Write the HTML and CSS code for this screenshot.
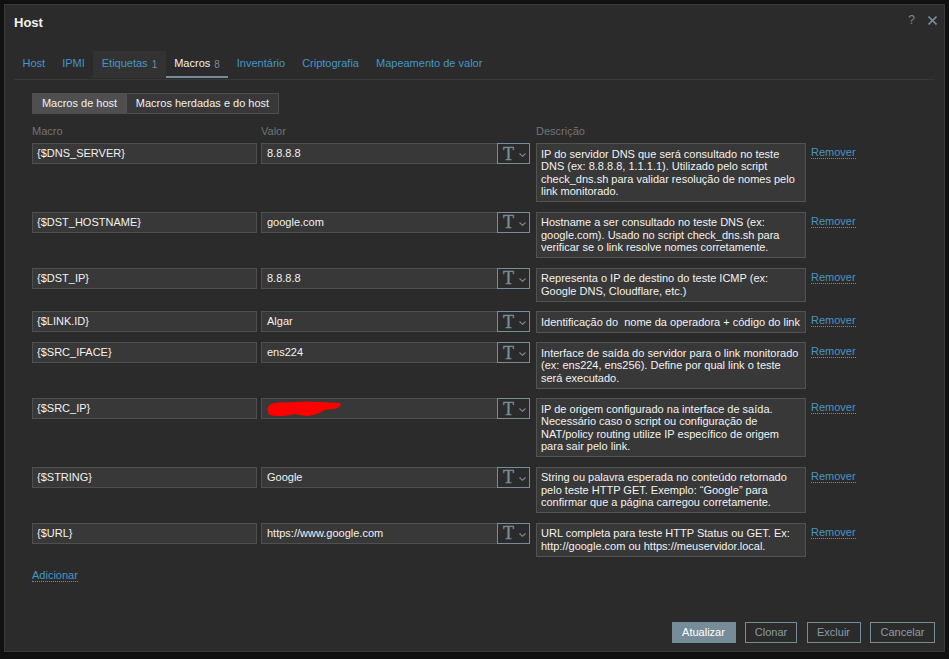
FILE: index.html
```html
<!DOCTYPE html>
<html lang="pt-BR">
<head>
<meta charset="utf-8">
<title>Host</title>
<link rel="stylesheet" href="styles.css">
</head>
<body>
<div class="dialog">
  <div class="dialog-head">
    <h1 class="title">Host</h1>
    <div class="head-ctrls">
      <span class="help">?</span>
      <svg class="close" width="9" height="9" viewBox="0 0 9 9"><path d="M0.5 0.5 L8.5 8.5 M8.5 0.5 L0.5 8.5" stroke="#768d99" stroke-width="1.6" fill="none"/></svg>
    </div>
  </div>

  <ul class="tabs">
    <li class="tab">Host</li>
    <li class="tab">IPMI</li>
    <li class="tab hover">Etiquetas<span class="count">1</span></li>
    <li class="tab active">Macros<span class="count">8</span></li>
    <li class="tab">Inventário</li>
    <li class="tab">Criptografia</li>
    <li class="tab">Mapeamento de valor</li>
  </ul>

  <div class="tab-body">
    <div class="seg">
      <span class="seg-btn on seg-a">Macros de host</span>
      <span class="seg-btn seg-b">Macros herdadas e do host</span>
    </div>

    <div class="row grid-head">
      <div class="c-macro">Macro</div>
      <div class="c-value">Valor</div>
      <div class="c-desc">Descrição</div>
    </div>

    <div class="rows">
      <div class="row">
        <div class="c-macro input">{$DNS_SERVER}</div>
        <div class="c-value"><div class="input">8.8.8.8</div><div class="t-btn"><span class="t-glyph">T</span><svg width="7" height="4" viewBox="0 0 7 4"><path d="M0.5 0.5 L3.5 3.3 L6.5 0.5" stroke="#768d99" stroke-width="1.1" fill="none"/></svg></div></div>
        <div class="c-desc desc">IP do servidor DNS que será consultado no teste<br>DNS (ex: 8.8.8.8, 1.1.1.1). Utilizado pelo script<br>check_dns.sh para validar resolução de nomes pelo<br>link monitorado.</div>
        <div class="c-act"><span class="link">Remover</span></div>
      </div>

      <div class="row">
        <div class="c-macro input">{$DST_HOSTNAME}</div>
        <div class="c-value"><div class="input">google.com</div><div class="t-btn"><span class="t-glyph">T</span><svg width="7" height="4" viewBox="0 0 7 4"><path d="M0.5 0.5 L3.5 3.3 L6.5 0.5" stroke="#768d99" stroke-width="1.1" fill="none"/></svg></div></div>
        <div class="c-desc desc">Hostname a ser consultado no teste DNS (ex:<br>google.com). Usado no script check_dns.sh para<br>verificar se o link resolve nomes corretamente.</div>
        <div class="c-act"><span class="link">Remover</span></div>
      </div>

      <div class="row">
        <div class="c-macro input">{$DST_IP}</div>
        <div class="c-value"><div class="input">8.8.8.8</div><div class="t-btn"><span class="t-glyph">T</span><svg width="7" height="4" viewBox="0 0 7 4"><path d="M0.5 0.5 L3.5 3.3 L6.5 0.5" stroke="#768d99" stroke-width="1.1" fill="none"/></svg></div></div>
        <div class="c-desc desc">Representa o IP de destino do teste ICMP (ex:<br>Google DNS, Cloudflare, etc.)</div>
        <div class="c-act"><span class="link">Remover</span></div>
      </div>

      <div class="row">
        <div class="c-macro input">{$LINK.ID}</div>
        <div class="c-value"><div class="input">Algar</div><div class="t-btn"><span class="t-glyph">T</span><svg width="7" height="4" viewBox="0 0 7 4"><path d="M0.5 0.5 L3.5 3.3 L6.5 0.5" stroke="#768d99" stroke-width="1.1" fill="none"/></svg></div></div>
        <div class="c-desc desc">Identificação do &nbsp;nome da operadora + código do link</div>
        <div class="c-act"><span class="link">Remover</span></div>
      </div>

      <div class="row">
        <div class="c-macro input">{$SRC_IFACE}</div>
        <div class="c-value"><div class="input">ens224</div><div class="t-btn"><span class="t-glyph">T</span><svg width="7" height="4" viewBox="0 0 7 4"><path d="M0.5 0.5 L3.5 3.3 L6.5 0.5" stroke="#768d99" stroke-width="1.1" fill="none"/></svg></div></div>
        <div class="c-desc desc">Interface de saída do servidor para o link monitorado<br>(ex: ens224, ens256). Define por qual link o teste<br>será executado.</div>
        <div class="c-act"><span class="link">Remover</span></div>
      </div>

      <div class="row">
        <div class="c-macro input">{$SRC_IP}</div>
        <div class="c-value"><div class="input redacted"><svg class="scribble" width="75" height="16" viewBox="0 0 75 16"><path d="M1 6 C3 2 9 1 17 1.5 L40 0.5 L73 2 C75 4 73 7 66 8 L57 9 C53 12.5 45 15 39 15 C33 14.5 30 12.5 25 13.5 C18 15.5 8 15.5 3 14 C0.5 12.5 0 9 1 6 Z" fill="#ff0000"/></svg></div><div class="t-btn"><span class="t-glyph">T</span><svg width="7" height="4" viewBox="0 0 7 4"><path d="M0.5 0.5 L3.5 3.3 L6.5 0.5" stroke="#768d99" stroke-width="1.1" fill="none"/></svg></div></div>
        <div class="c-desc desc">IP de origem configurado na interface de saída.<br>Necessário caso o script ou configuração de<br>NAT/policy routing utilize IP específico de origem<br>para sair pelo link.</div>
        <div class="c-act"><span class="link">Remover</span></div>
      </div>

      <div class="row">
        <div class="c-macro input">{$STRING}</div>
        <div class="c-value"><div class="input">Google</div><div class="t-btn"><span class="t-glyph">T</span><svg width="7" height="4" viewBox="0 0 7 4"><path d="M0.5 0.5 L3.5 3.3 L6.5 0.5" stroke="#768d99" stroke-width="1.1" fill="none"/></svg></div></div>
        <div class="c-desc desc">String ou palavra esperada no conteúdo retornado<br>pelo teste HTTP GET. Exemplo: “Google” para<br>confirmar que a página carregou corretamente.</div>
        <div class="c-act"><span class="link">Remover</span></div>
      </div>

      <div class="row">
        <div class="c-macro input">{$URL}</div>
        <div class="c-value"><div class="input">https://www.google.com</div><div class="t-btn"><span class="t-glyph">T</span><svg width="7" height="4" viewBox="0 0 7 4"><path d="M0.5 0.5 L3.5 3.3 L6.5 0.5" stroke="#768d99" stroke-width="1.1" fill="none"/></svg></div></div>
        <div class="c-desc desc">URL completa para teste HTTP Status ou GET. Ex:<br>http://google.com ou https://meuservidor.local.</div>
        <div class="c-act"><span class="link">Remover</span></div>
      </div>
    </div>

    <div class="add-wrap"><span class="link">Adicionar</span></div>
  </div>

  <div class="footer">
    <span class="btn primary b-upd">Atualizar</span>
    <span class="btn b-clone">Clonar</span>
    <span class="btn b-del">Excluir</span>
    <span class="btn b-cancel">Cancelar</span>
  </div>
</div>
</body>
</html>
```

FILE: styles.css
```css
* { box-sizing: border-box; }
html, body { margin: 0; height: 100%; }
body {
  background: #101010;
  font-family: "Liberation Sans", Arial, sans-serif;
  font-size: 11px;
  color: #f2f2f2;
  overflow: hidden;
  padding: 4px 0 0 4px;
}
.dialog {
  width: 941px;
  height: 648px;
  background: #2b2b2b;
  border: 1px solid #3a3a3a;
  padding: 0 9px;
  display: flex;
  flex-direction: column;
}
.dialog-head {
  height: 46px;
  flex: none;
  display: flex;
  justify-content: space-between;
  align-items: flex-start;
}
.title {
  margin: 10px 0 0;
  font-size: 13px;
  line-height: 16px;
  font-weight: bold;
  color: #f2f2f2;
}
.head-ctrls {
  display: flex;
  align-items: center;
  gap: 13px;
  height: 12px;
  margin-top: 9px;
  margin-right: -2px;
  color: #768d99;
}
.help { font-size: 12px; line-height: 12px; }
.close { display: block; }

.tabs {
  list-style: none;
  margin: 0;
  padding: 0 0 1px;
  display: flex;
  flex: none;
  border-bottom: 1px solid #383838;
}
.tab {
  padding: 0 8.5px;
  line-height: 25px;
  border-bottom: 2px solid transparent;
  color: #4796c4;
}
.tab.hover { background: #323232; }
.tab.active { color: #f2f2f2; border-bottom-color: #768d99; }
.count { font-size: 10px; color: #768d99; margin-left: 4px; position: relative; top: 1px; }

.tab-body { padding: 13px 18px 0; }
.seg { display: flex; }
.seg-btn {
  height: 21px;
  line-height: 19px;
  border: 1px solid #4f4f4f;
  background: #383838;
  color: #f2f2f2;
  text-align: center;
}
.seg-btn.on { background: #4f4f4f; }
.seg-btn + .seg-btn { border-left: none; }
.seg-a { width: 95px; }
.seg-b { width: 152px; }

.row { display: flex; align-items: flex-start; }
.grid-head {
  margin-top: 11px;
  height: 12px;
  line-height: 12px;
  color: #737373;
}
.rows {
  display: flex;
  flex-direction: column;
  gap: 9.5px;
  margin-top: 6.3px;
}
.c-macro { width: 225px; margin-right: 4px; flex: none; }
.c-value { width: 269px; display: flex; flex: none; }
.c-desc { width: 270px; margin-left: 6px; flex: none; }
.c-act { margin-left: 5px; }

.input {
  height: 21px;
  border: 1px solid #4f4f4f;
  background: #383838;
  line-height: 19px;
  padding: 0 4px;
  color: #f2f2f2;
  white-space: nowrap;
  overflow: hidden;
}
.c-value .input { flex: 1; padding-left: 5px; border-right: none; }
.redacted { display: flex; align-items: center; padding-left: 6px; }
.scribble { display: block; margin-top: 1px; }

.t-btn {
  width: 33px;
  height: 21px;
  flex: none;
  border: 1px solid #768d99;
  display: flex;
  align-items: center;
  padding-left: 5px;
}
.t-glyph {
  font-family: "Liberation Serif", "Times New Roman", serif;
  font-size: 18px;
  line-height: 19px;
  color: #768d99;
  -webkit-text-stroke: 0.4px #768d99;
  width: 12px;
  margin-right: 4px;
  margin-top: 1px;
}
.t-btn svg { display: block; margin-top: 3px; }

.desc {
  border: 1px solid #525252;
  background: #383838;
  padding: 3.5px 4px;
  line-height: 12.5px;
  white-space: nowrap;
  color: #f2f2f2;
  overflow: hidden;
}

.link {
  display: inline-block;
  color: #4796c4;
  border-bottom: 1px dotted #4796c4;
  line-height: 12px;
}
.c-act .link { margin-top: 3px; }
.add-wrap { margin-top: 12px; }

.footer {
  margin-top: auto;
  display: flex;
  justify-content: flex-end;
  gap: 9.5px;
  padding-bottom: 8px;
}
.btn {
  height: 21px;
  line-height: 19px;
  border: 1px solid #768d99;
  color: #8c9ba4;
  text-align: center;
}
.btn.primary { background: #768d99; color: #ffffff; }
.b-upd { width: 64px; }
.b-clone { width: 52px; }
.b-del { width: 54px; }
.b-cancel { width: 65px; }
```
